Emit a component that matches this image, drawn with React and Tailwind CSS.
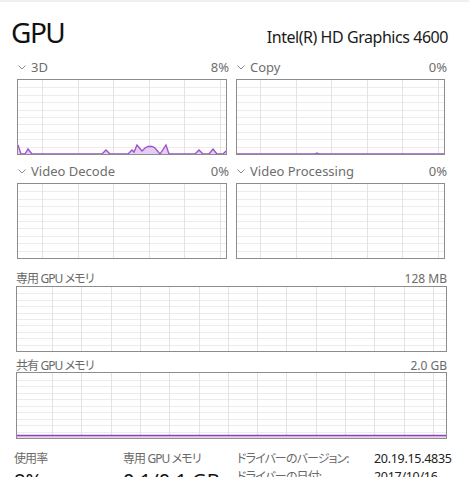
import React from "react";

const font = "font-['Noto_Sans','Noto_Sans_CJK_JP',sans-serif] [font-feature-settings:'palt']";
const jp = "text-[12px] tracking-[-0.9px]";

// peaks of the 3D engine graph, [x, height] in inner chart pixels
const usage3d = [
  [0, 9], [3, 0], [7, 0], [10, 5], [14, 0],
  [84, 0], [88, 4], [92, 0],
  [110, 0], [114, 4], [116, 2], [119, 9], [124, 3], [127, 6], [130, 7.5],
  [134, 7.5], [137, 6], [142, 0], [148, 9], [151, 0],
  [177, 0], [181, 4], [185, 0], [191, 0], [195, 5], [199, 0],
  [205, 0], [208, 3],
];

const Chevron = () => (
  <svg width="8" height="5" viewBox="0 0 8 5" className="mr-[5px] mt-[1px]">
    <path d="M0.5 0.5 L4 4 L7.5 0.5" fill="none" stroke="#8a8a8a" strokeWidth="1" />
  </svg>
);

const Chart = ({ w, h, colStart, colStep, rows, data, flat }) => {
  const cols = [];
  for (let x = colStart; x < w; x += colStep) cols.push(Math.round(x) + 0.5);
  const lines = [];
  for (let i = 1; i < rows; i++) lines.push(Math.round((h / rows) * i) + 0.5);
  let poly = null;
  if (data) {
    const pts = data.map(([x, v]) => `${x},${h - v}`).join(" ");
    poly = (
      <>
        <polygon points={`0,${h} ${pts} ${w},${h}`} fill="#e3cdf2" />
        <polyline points={pts} fill="none" stroke="#9c4fc9" strokeWidth="1.3" />
      </>
    );
  }
  return (
    <div className="border border-[#8c8c8c] bg-white" style={{ width: w + 2, height: h + 2 }}>
      <svg width={w} height={h} className="block">
        {lines.map((y) => (
          <line key={"h" + y} x1="0" x2={w} y1={y} y2={y} stroke="#ececec" strokeWidth="1" />
        ))}
        {cols.map((x) => (
          <line key={"v" + x} x1={x} x2={x} y1="0" y2={h} stroke="#e2e2e2" strokeWidth="1" />
        ))}
        {poly}
        {flat && (
          <>
            <rect x="0" y={h - flat} width={w} height={flat} fill="#e6d6f1" />
            <line x1="0" x2={w} y1={h - flat} y2={h - flat} stroke="#8e44b8" strokeWidth="1.6" />
          </>
        )}
      </svg>
    </div>
  );
};

const EngineLabel = ({ name, value }) => (
  <div className="flex items-center justify-between h-[18px] text-[13px] leading-[18px] text-[#6e6e6e]">
    <div className="flex items-center pl-[1px]">
      <Chevron />
      <span>{name}</span>
    </div>
    <span>{value}</span>
  </div>
);

const EngineRow = ({ left, right, data, mt }) => (
  <div className={`flex pl-[17px] ${mt}`}>
    <div className="w-[212px]">
      <EngineLabel name={left[0]} value={left[1]} />
      <div className="mt-[3px]">
        <Chart w={208} h={74} colStart={24} colStep={35.6} rows={10} data={data} />
      </div>
    </div>
    <div className="w-[211px] ml-[7px]">
      <EngineLabel name={right[0]} value={right[1]} />
      <div className="mt-[3px]">
        <Chart w={207} h={74} colStart={23} colStep={35.6} rows={10} data={right[2]} />
      </div>
    </div>
  </div>
);

export default function App() {
  return (
    <div className={`w-[469px] h-[477px] overflow-hidden bg-white ${font}`}>
      <div className="h-[2px] bg-[#f0f0f0]" />
      <div className="flex items-baseline justify-between pl-[11px] pr-[21px] pt-[11px]">
        <span className="text-[28px] leading-[38px] tracking-[-1.5px] text-[#111]">GPU</span>
        <span className="text-[16px] leading-[24px] tracking-[-0.45px] text-[#1a1a1a]">Intel(R) HD Graphics 4600</span>
      </div>

      <EngineRow
        mt="mt-[7px]"
        left={["3D", "8%"]}
        right={["Copy", "0%", [[0, 0], [78, 0], [80, 1], [82, 0], [207, 0]]]}
        data={usage3d}
      />
      <EngineRow
        mt="mt-[7px]"
        left={["Video Decode", "0%"]}
        right={["Video Processing", "0%"]}
      />

      <div className="px-[16px] mt-[9px] w-[463px]">
        <div className="flex justify-between h-[16px] text-[13px] leading-[21px] text-[#6a6a6a]">
          <span className={jp}>専用 GPU メモリ</span>
          <span className="text-[12px]">128 MB</span>
        </div>
        <div className="mt-[2px]">
          <Chart w={429} h={64} colStart={35} colStep={29.3} rows={10} />
        </div>
        <div className="flex justify-between h-[16px] mt-[4px] text-[13px] leading-[19px] text-[#6a6a6a]">
          <span className={jp}>共有 GPU メモリ</span>
          <span className="text-[12px]">2.0 GB</span>
        </div>
        <div>
          <Chart w={429} h={65} colStart={35} colStep={29.3} rows={10} flat={2.5} />
        </div>
      </div>

      <div className="flex pl-[14px] mt-[11px] text-[13px] leading-[18px] whitespace-nowrap">
        <div className="w-[109px]">
          <div className={`text-[#6a6a6a] ${jp}`}>使用率</div>
          <div className="text-[20px] leading-[26px] text-[#111]">8%</div>
        </div>
        <div className="w-[114px]">
          <div className={`text-[#6a6a6a] ${jp}`}>専用 GPU メモリ</div>
          <div className="text-[20px] leading-[26px] text-[#111]">0.1/0.1 GB</div>
        </div>
        <div className="w-[137px] text-[#6a6a6a]">
          <div className={jp}>ドライバーのバージョン:</div>
          <div className={jp}>ドライバーの日付:</div>
        </div>
        <div className="text-[#222] text-[12.5px] tracking-[-0.3px]">
          <div>20.19.15.4835</div>
          <div>2017/10/16</div>
        </div>
      </div>
    </div>
  );
}
